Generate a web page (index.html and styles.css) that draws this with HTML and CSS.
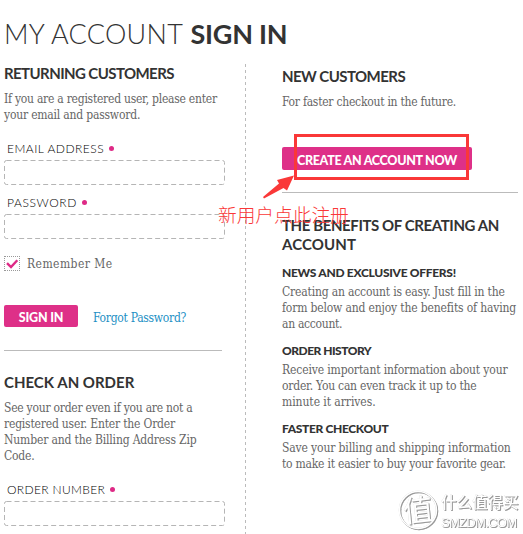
FILE: index.html
```
<!DOCTYPE html>
<html>
<head>
	<meta charset="utf-8">
	<meta name="viewport" content="width=device-width, initial-scale=1">
	<title>My Account</title>
	<link rel="stylesheet" href="styles.css">
</head>
<body>
	<h1 class="title"><span class="thin">MY ACCOUNT</span> <span class="strong">SIGN IN</span></h1>

	<div class="columns">
		<div class="left">
			<h2 class="returning">RETURNING CUSTOMERS</h2>
			<p class="intro"><span class="l1">If you are a registered user, please enter</span><br><span class="l2">your email and password.</span></p>

			<div class="field">
				<label for="email"><span class="lb1">EMAIL ADDRESS</span><i class="dot"></i></label>
				<svg class="box" width="221" height="25"><rect x=".5" y=".5" width="220" height="24" rx="2"/></svg>
			</div>
			<div class="field">
				<label for="password"><span class="lb2">PASSWORD</span><i class="dot"></i></label>
				<svg class="box" width="221" height="25"><rect x=".5" y=".5" width="220" height="24" rx="2"/></svg>
			</div>

			<div class="remember">
				<span class="check"><svg width="14" height="13" viewBox="0 0 14 13"><path d="M2 6.2L6 10L12.3 3.2"/></svg></span>
				<span class="rm">Remember Me</span>
			</div>

			<div class="actions">
				<a class="btn signin"><span>SIGN IN</span></a>
				<a class="forgot">Forgot Password?</a>
			</div>

			<h2 class="order">CHECK AN ORDER</h2>
			<p class="order-text"><span class="l3">See your order even if you are not a</span><br><span class="l4">registered user. Enter the Order</span><br><span class="l5">Number and the Billing Address Zip</span><br><span class="l6">Code.</span></p>
			<div class="field">
				<label for="order"><span class="lb3">ORDER NUMBER</span><i class="dot"></i></label>
				<svg class="box" width="221" height="25"><rect x=".5" y=".5" width="220" height="24" rx="2"/></svg>
			</div>
		</div>

		<div class="divider"></div>

		<div class="right">
			<h2 class="new">NEW CUSTOMERS</h2>
			<p class="faster"><span class="r1">For faster checkout in the future.</span></p>
			<a class="btn create"><span>CREATE AN ACCOUNT NOW</span></a>

			<h2 class="benefits"><span class="b1">THE BENEFITS OF CREATING AN</span><br><span class="b2">ACCOUNT</span></h2>

			<h3 class="h-news">NEWS AND EXCLUSIVE OFFERS!</h3>
			<p><span class="r2">Creating an account is easy. Just fill in the</span><br><span class="r3">form below and enjoy the benefits of having</span><br><span class="r4">an account.</span></p>
			<h3 class="h-history">ORDER HISTORY</h3>
			<p><span class="r5">Receive important information about your</span><br><span class="r6">order. You can even track it up to the</span><br><span class="r7">minute it arrives.</span></p>
			<h3 class="h-faster">FASTER CHECKOUT</h3>
			<p><span class="r8">Save your billing and shipping information</span><br><span class="r9">to make it easier to buy your favorite gear.</span></p>
		</div>
	</div>

	<!-- note on top of the page -->
	<div class="mark"></div>
	<svg class="arrow" width="34" height="26" viewBox="0 0 34 26"><path d="M1 24L17 10.5L15 7L32 2.500L25 17.500L21.500 15L2 25.500Z"/></svg>
	<div class="note">新用户点此注册</div>

	<svg class="watermark" width="121" height="42" viewBox="0 0 121 42">
		<circle cx="20" cy="20" r="18.500"/>
		<text class="zhi" x="5" y="31" transform="rotate(-6 20 20)">值</text>
		<text class="cn" x="43" y="18">什么值得买</text>
		<text class="en" x="43" y="37" textLength="76">SMZDM.COM</text>
	</svg>
</body>
</html>
```
FILE: styles.css
```
body {
	margin: 0;
	height: 534px;
	overflow: hidden;
	background: #fff;
	font-family: "DejaVu Serif Condensed", "DejaVu Serif", serif;
	font-stretch: condensed;
	font-size: 12px;
	line-height: 16px;
	color: #666;
	position: relative;
}
h1, h2, h3, p { margin: 0; white-space: nowrap; }
h1, h2, h3, label, .btn { font-family: Lato, "Liberation Sans", sans-serif; color: #333; }

.title { padding: 14px 0 0 4px; height: 50px; line-height: 40px; font-size: 27px; font-weight: 300; }
.title .thin { letter-spacing: .3px; }
.title .strong { font-weight: 700; letter-spacing: -.25px; }

.columns { display: flex; height: 470px; }
.left { width: 221px; padding-left: 4px; }
.divider {
	width: 1px;
	margin-left: 20px;
	background: repeating-linear-gradient(#bbb 0 3px, transparent 3px 6px);
}
.right { width: 236px; padding-left: 36px; }

h2 { font-size: 15px; line-height: 19px; font-weight: 700; }
h3 { font-size: 12px; line-height: 16px; font-weight: 900; }
.right h3 { padding-top: 11px; }
.right h3 + p { padding-top: 3px; }

.intro { padding: 8px 0 16px; }
.field { height: 54px; }
.field label { display: flex; align-items: center; height: 19px; padding: 0 0 2px 3px; font-size: 12px; font-weight: 300; color: #000; }
.dot { width: 5px; height: 5px; margin-left: 5px; border-radius: 50%; background: #de2a86; }
.box { display: block; overflow: visible; }
.box rect { fill: #fff; stroke: #b5b5b5; stroke-dasharray: 5 3; }

.remember { display: flex; align-items: center; height: 17px; margin-top: 8px; }
.check { width: 14px; height: 13px; border: 1px dotted #999; margin-right: 7px; }
.check svg { display: block; }
.check path { fill: none; stroke: #de2a86; stroke-width: 2.400; }

.actions { display: flex; align-items: center; width: 218px; height: 22px; padding: 33px 0 23px; border-bottom: 1px solid #bbb; }
.btn { display: flex; align-items: center; justify-content: center; border-radius: 2px; background: #de3088; color: #fff; font-size: 12.500px; font-weight: 900; white-space: nowrap; box-sizing: border-box; padding-top: 2px; }
.signin { width: 74px; height: 22px; padding-top: 3px; letter-spacing: -.2px; }
.forgot { margin-left: 15px; padding-top: 3px; color: #1c8fc4; letter-spacing: -.28px; }

.order { padding-top: 22px; }
.order-text { padding: 8px 0 16px; }

.new { padding-top: 3px; }
.faster { padding: 8px 0 37px; }
.create { width: 190px; height: 23px; padding-top: 4px; letter-spacing: -.3px; }
.benefits { margin-top: 22px; padding-top: 23px; border-top: 1px solid #bbb; }

/* tracking */
.returning { letter-spacing: -.58px; }
.new { letter-spacing: -.55px; }
.b1 { letter-spacing: -.4px; }
.b2 { letter-spacing: .1px; }
.h-news { letter-spacing: -.3px; }
.h-history { letter-spacing: -.5px; }
.h-faster { letter-spacing: -.35px; }
.lb1 { letter-spacing: .5px; }
.lb2 { letter-spacing: .6px; }
.lb3 { letter-spacing: .35px; }
.rm { letter-spacing: .45px; }
.l1, .l3, .r1 { letter-spacing: -.25px; }
.l2, .l4, .l6 { letter-spacing: -.2px; }
.l5, .r3 { letter-spacing: -.16px; }
.r2 { letter-spacing: -.18px; }
.r4 { letter-spacing: -.3px; }
.r5, .r8 { letter-spacing: -.13px; }
.r6, .r9 { letter-spacing: -.23px; }
.r7 { letter-spacing: -.06px; }

.mark { position: absolute; left: 294px; top: 134px; width: 169px; height: 40px; border: 3px solid #fa3838; }
.arrow { position: absolute; left: 262px; top: 173px; fill: #fa3838; }
.note {
	position: absolute; left: 218px; top: 202px;
	font: 300 18.700px/24px "Noto Sans CJK SC", sans-serif;
	color: #fa3838;
	white-space: nowrap;
}

.watermark { position: absolute; left: 398px; top: 490px; filter: drop-shadow(1px 1px .6px #999) drop-shadow(0 0 .4px #ccc); }
.watermark circle { fill: none; stroke: #fff; stroke-width: 1.500; }
.watermark text { fill: #fff; font-family: "Noto Sans CJK SC", sans-serif; }
.watermark .zhi { font-size: 30px; }
.watermark .cn { font-size: 15.500px; font-weight: 500; }
.watermark .en { font: 13px "Liberation Sans", sans-serif; }
```
